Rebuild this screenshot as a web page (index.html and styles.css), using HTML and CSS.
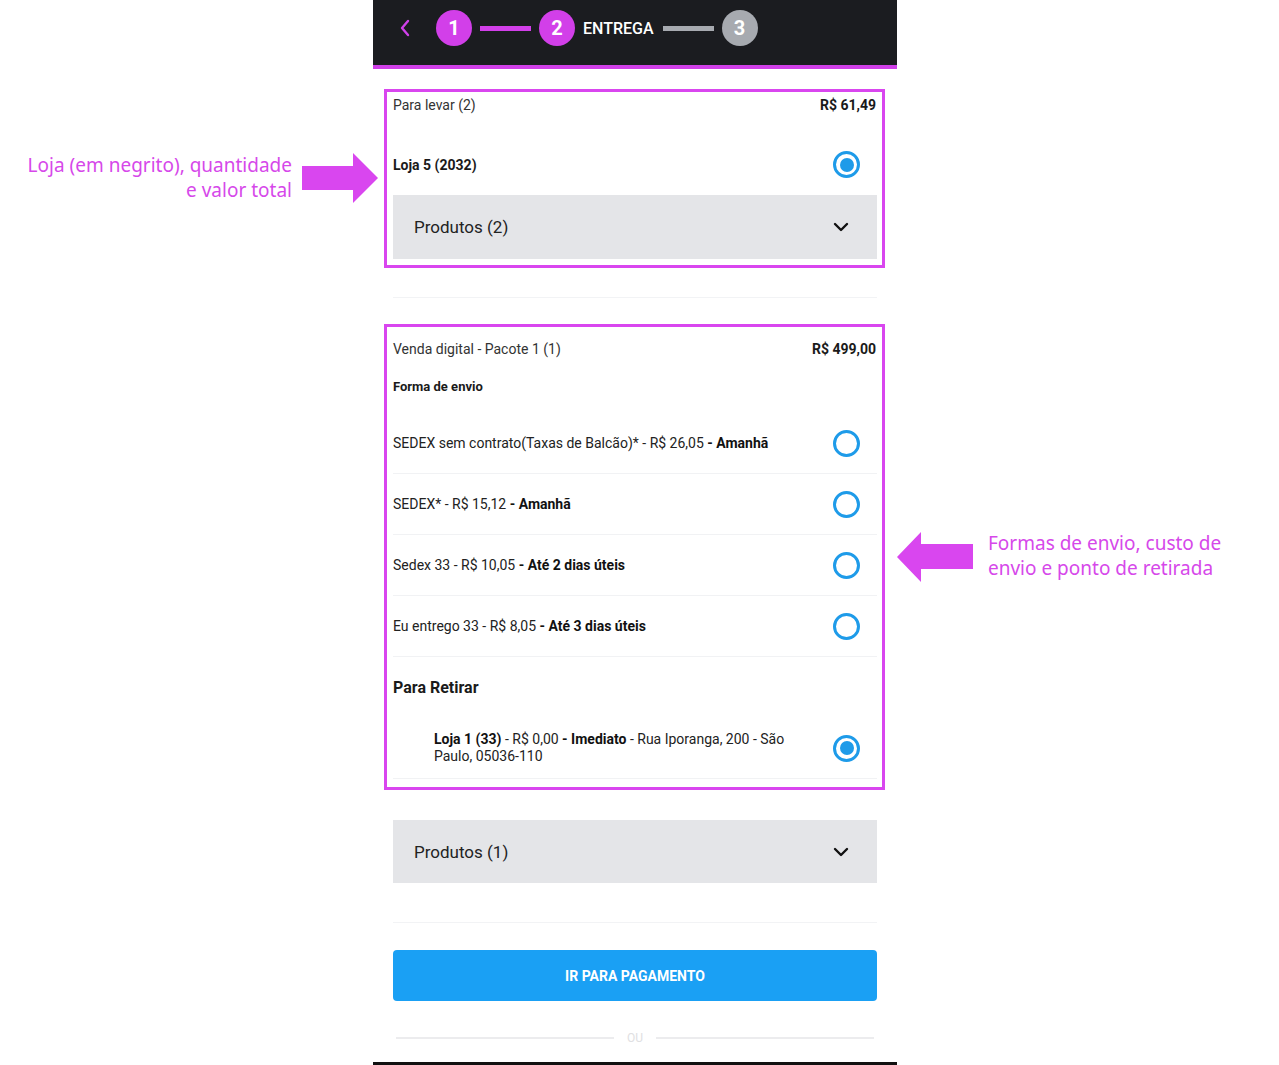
FILE: index.html
```html
<!DOCTYPE html>
<html lang="pt-BR">
<head>
<meta charset="utf-8">
<title>Entrega</title>
<link rel="stylesheet" href="styles.css">
</head>
<body>
<div class="page">
  <aside class="side side-left">
    <div class="note note-left">
      <p class="note-text">Loja (em negrito), quantidade<br>e valor total</p>
      <svg class="arrow" width="76" height="50" viewBox="0 0 76 50"><polygon points="0,13 51,13 51,0 76,25 51,50 51,37 0,37" fill="#d946ef"/></svg>
    </div>
  </aside>

  <main class="phone">
    <header class="topbar">
      <svg class="back" width="12" height="18" viewBox="0 0 12 18"><path d="M9 2 L3 9 L9 16" fill="none" stroke="#d040ea" stroke-width="2.4" stroke-linecap="round" stroke-linejoin="round"/></svg>
      <span class="step step-on">1</span>
      <span class="bar bar-on"></span>
      <span class="step step-on">2</span>
      <span class="step-label">ENTREGA</span>
      <span class="bar bar-off"></span>
      <span class="step step-off">3</span>
    </header>

    <section class="box box-1">
      <div class="row-head">
        <span class="head-title">Para levar (2)</span>
        <span class="head-price">R$ 61,49</span>
      </div>
      <div class="row-store">
        <span class="store-name">Loja 5 (2032)</span>
        <span class="radio radio-on"></span>
      </div>
      <div class="accordion">
        <span>Produtos (2)</span>
        <svg class="chev" width="16" height="10" viewBox="0 0 16 10"><path d="M2 2 L8 8 L14 2" fill="none" stroke="#111" stroke-width="2.4" stroke-linecap="round" stroke-linejoin="round"/></svg>
      </div>
    </section>

    <div class="divider divider-1"></div>

    <section class="box box-2">
      <div class="row-head">
        <span class="head-title">Venda digital - Pacote 1 (1)</span>
        <span class="head-price">R$ 499,00</span>
      </div>
      <div class="subhead">Forma de envio</div>
      <div class="option"><span>SEDEX sem contrato(Taxas de Balcão)* - R$ 26,05 <b>- Amanhã</b></span><span class="radio"></span></div>
      <div class="option"><span>SEDEX* - R$ 15,12 <b>- Amanhã</b></span><span class="radio"></span></div>
      <div class="option"><span>Sedex 33 - R$ 10,05 <b>- Até 2 dias úteis</b></span><span class="radio"></span></div>
      <div class="option"><span>Eu entrego 33 - R$ 8,05 <b>- Até 3 dias úteis</b></span><span class="radio"></span></div>
      <div class="pickup-title">Para Retirar</div>
      <div class="option pickup"><p class="pickup-text"><b>Loja 1 (33)</b> - R$ 0,00 <b>- Imediato</b> - Rua Iporanga, 200 - São Paulo, 05036-110</p><span class="radio radio-on"></span></div>
    </section>

    <div class="accordion accordion-2">
      <span>Produtos (1)</span>
      <svg class="chev" width="16" height="10" viewBox="0 0 16 10"><path d="M2 2 L8 8 L14 2" fill="none" stroke="#111" stroke-width="2.4" stroke-linecap="round" stroke-linejoin="round"/></svg>
    </div>

    <div class="divider divider-2"></div>

    <button class="pay">IR PARA PAGAMENTO</button>

    <div class="or"><span class="or-line"></span><span class="or-text">OU</span><span class="or-line"></span></div>

    <div class="bottom"></div>
  </main>

  <aside class="side side-right">
    <div class="note note-right">
      <svg class="arrow" width="76" height="50" viewBox="0 0 76 50"><polygon points="0,25 24,0 24,12 76,12 76,37 24,37 24,50" fill="#d946ef"/></svg>
      <p class="note-text">Formas de envio, custo de<br>envio e ponto de retirada</p>
    </div>
  </aside>
</div>
</body>
</html>
```

FILE: styles.css
```css
* { box-sizing: border-box; }
html, body { margin: 0; padding: 0; background: #fff; }
body { font-family: Roboto, "Liberation Sans", sans-serif; color: #222; }

.page {
  display: flex;
  width: 1279px;
  height: 1065px;
  overflow: hidden;
}

.side-left { flex: 0 0 373px; width: 373px; position: relative; z-index: 2; }
.side-right { flex: 1 1 0; }

.note { display: flex; align-items: center; }
.note-text {
  margin: 0;
  font-family: "Noto Sans", sans-serif;
  font-size: 19px;
  line-height: 25px;
  color: #d648ea;
}
.note-left {
  justify-content: flex-end;
  margin-top: 153px;
  margin-right: -5px;
  gap: 10px;
}
.note-left .note-text { text-align: right; }
.note-right {
  margin-top: 532px;
  gap: 15px;
}
.note-right .note-text { margin-top: -2px; }

.phone {
  flex: 0 0 524px;
  width: 524px;
  display: flex;
  flex-direction: column;
}

.topbar {
  height: 69px;
  flex: 0 0 69px;
  background: #1b1c20;
  border-bottom: 4px solid #d03fe8;
  display: flex;
  align-items: center;
  padding: 0 0 9px 26px;
}
.back { margin-right: 25px; }
.step {
  width: 36px; height: 36px;
  border-radius: 50%;
  display: flex; align-items: center; justify-content: center;
  color: #fff;
  font-weight: 700;
  font-size: 20px;
}
.step-on { background: #d23fe9; }
.step-off { background: #a7aab0; }
.bar { height: 5px; width: 51px; margin: 0 8px; }
.bar-on { background: #d23fe9; }
.bar-off { background: #a7aab0; margin-left: 9px; }
.step-label {
  color: #fff;
  font-size: 16px;
  font-weight: 500;
  margin-left: 8px;
}

.box {
  border: 3px solid #d946ef;
  margin: 0 12px 0 11px;
  padding: 0 5px 0 6px;
}
.box-1 { margin-top: 20px; padding-bottom: 6px; }
.box-2 { padding-bottom: 8px; }

.row-head {
  display: flex;
  justify-content: space-between;
  align-items: center;
  font-size: 14px;
  padding-right: 1px;
}
.head-title { color: #333; }
.head-price { font-weight: 700; color: #1a1a1a; }
.box-1 .row-head { height: 26px; }
.box-2 .row-head { height: 44px; }

.row-store {
  display: flex;
  justify-content: space-between;
  align-items: center;
  height: 77px;
  padding-top: 16px;
}
.store-name { font-weight: 700; font-size: 14px; color: #1a1a1a; }

.radio {
  width: 27px; height: 27px;
  border-radius: 50%;
  border: 3px solid #1e9be9;
  margin-right: 17px;
  flex: 0 0 27px;
  display: flex; align-items: center; justify-content: center;
}
.radio-on::after {
  content: "";
  width: 14px; height: 14px;
  border-radius: 50%;
  background: #1e9be9;
}

.accordion {
  height: 64px;
  flex: 0 0 64px;
  background: #e4e5e8;
  display: flex;
  align-items: center;
  justify-content: space-between;
  padding: 0 28px 0 21px;
  font-size: 17px;
  color: #222;
}
.accordion-2 { margin: 30px 20px 0 20px; height: 63px; flex-basis: 63px; }

.divider { height: 1px; flex: 0 0 1px; background: #f2f3f5; margin: 0 20px; }
.divider-1 { margin-top: 29px; margin-bottom: 26px; }
.divider-2 { margin-top: 39px; margin-bottom: 27px; }

.subhead {
  font-size: 13px;
  font-weight: 700;
  color: #1a1a1a;
  height: 42px;
  padding-top: 8px;
}

.option {
  display: flex;
  justify-content: space-between;
  align-items: center;
  height: 61px;
  border-bottom: 1px solid #f1f2f4;
  font-size: 14px;
  color: #222;
}
.option b { color: #111; }
.pickup-title {
  height: 61px;
  display: flex;
  align-items: center;
  font-size: 16px;
  font-weight: 700;
  color: #1a1a1a;
}
.pickup { height: 61px; padding-left: 41px; }
.pickup-text { width: 360px; margin: 0; line-height: 17px; }

.pay {
  height: 51px;
  flex: 0 0 51px;
  margin: 0 20px;
  border: none;
  border-radius: 4px;
  background: #1aa0f4;
  color: #fff;
  font-family: Roboto, "Liberation Sans", sans-serif;
  font-weight: 700;
  font-size: 14px;
}

.or {
  display: flex;
  align-items: center;
  margin: 29px 23px 0 23px;
  height: 15px;
  flex: 0 0 15px;
}
.or-line { flex: 1; height: 2px; background: #ececee; }
.or-text { color: #e0e0e2; font-size: 12px; margin: 0 13px; }

.bottom {
  margin-top: 17px;
  height: 5px;
  flex: 0 0 5px;
  background: #111;
}
```
